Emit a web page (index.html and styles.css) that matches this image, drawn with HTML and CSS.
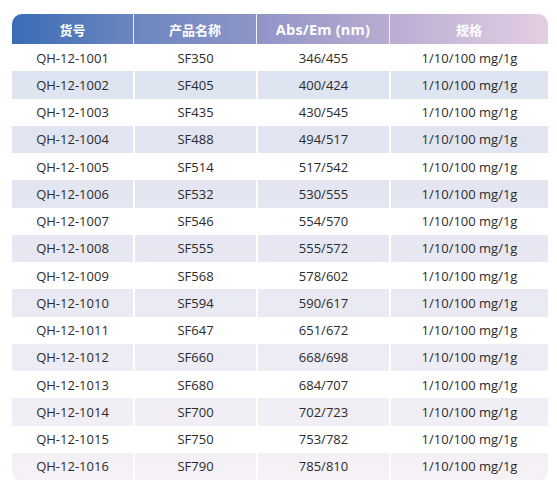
FILE: index.html
```html
<!DOCTYPE html>
<html lang="zh">
<head>
<meta charset="utf-8">
<link rel="stylesheet" href="styles.css">
</head>
<body>
<div class="table">
  <div class="row head">
    <div class="cell">货号</div>
    <div class="cell">产品名称</div>
    <div class="cell latin">Abs/Em (nm)</div>
    <div class="cell">规格</div>
  </div>
  <div class="body">
    <div class="row"><div class="cell">QH-12-1001</div><div class="cell">SF350</div><div class="cell">346/455</div><div class="cell">1/10/100 mg/1g</div></div>
    <div class="row"><div class="cell">QH-12-1002</div><div class="cell">SF405</div><div class="cell">400/424</div><div class="cell">1/10/100 mg/1g</div></div>
    <div class="row"><div class="cell">QH-12-1003</div><div class="cell">SF435</div><div class="cell">430/545</div><div class="cell">1/10/100 mg/1g</div></div>
    <div class="row"><div class="cell">QH-12-1004</div><div class="cell">SF488</div><div class="cell">494/517</div><div class="cell">1/10/100 mg/1g</div></div>
    <div class="row"><div class="cell">QH-12-1005</div><div class="cell">SF514</div><div class="cell">517/542</div><div class="cell">1/10/100 mg/1g</div></div>
    <div class="row"><div class="cell">QH-12-1006</div><div class="cell">SF532</div><div class="cell">530/555</div><div class="cell">1/10/100 mg/1g</div></div>
    <div class="row"><div class="cell">QH-12-1007</div><div class="cell">SF546</div><div class="cell">554/570</div><div class="cell">1/10/100 mg/1g</div></div>
    <div class="row"><div class="cell">QH-12-1008</div><div class="cell">SF555</div><div class="cell">555/572</div><div class="cell">1/10/100 mg/1g</div></div>
    <div class="row"><div class="cell">QH-12-1009</div><div class="cell">SF568</div><div class="cell">578/602</div><div class="cell">1/10/100 mg/1g</div></div>
    <div class="row"><div class="cell">QH-12-1010</div><div class="cell">SF594</div><div class="cell">590/617</div><div class="cell">1/10/100 mg/1g</div></div>
    <div class="row"><div class="cell">QH-12-1011</div><div class="cell">SF647</div><div class="cell">651/672</div><div class="cell">1/10/100 mg/1g</div></div>
    <div class="row"><div class="cell">QH-12-1012</div><div class="cell">SF660</div><div class="cell">668/698</div><div class="cell">1/10/100 mg/1g</div></div>
    <div class="row"><div class="cell">QH-12-1013</div><div class="cell">SF680</div><div class="cell">684/707</div><div class="cell">1/10/100 mg/1g</div></div>
    <div class="row"><div class="cell">QH-12-1014</div><div class="cell">SF700</div><div class="cell">702/723</div><div class="cell">1/10/100 mg/1g</div></div>
    <div class="row"><div class="cell">QH-12-1015</div><div class="cell">SF750</div><div class="cell">753/782</div><div class="cell">1/10/100 mg/1g</div></div>
    <div class="row"><div class="cell">QH-12-1016</div><div class="cell">SF790</div><div class="cell">785/810</div><div class="cell">1/10/100 mg/1g</div></div>
  </div>
</div>
</body>
</html>
```
FILE: styles.css
```css
html, body {
  margin: 0;
  padding: 0;
  background: #ffffff;
}
body {
  font-family: "Open Sans", "Noto Sans CJK SC", sans-serif;
  font-size: 13px;
  color: #2b2b2b;
}
.table {
  margin: 14px 0 0 12px;
  width: 536px;
}
.row {
  display: grid;
  grid-template-columns: 121px 123px 133px 159px;
  height: 27.25px;
}
.cell {
  display: flex;
  align-items: center;
  justify-content: center;
  white-space: nowrap;
}
.cell + .cell {
  border-left: 2px solid #ffffff;
}
.head {
  height: 30px;
  border-radius: 10px 10px 0 0;
  background: linear-gradient(90deg, #3a6cb4 0%, #6a86c0 22%, #8e94c6 45%, #b9acd2 70%, #e4cfe3 100%);
  color: #ffffff;
  font-weight: 700;
}
.head .latin {
  font-size: 14.5px;
  letter-spacing: 0.2px;
}
.head .cell + .cell {
  border-left: 1.5px solid rgba(255, 255, 255, 0.85);
}
.body {
  background: linear-gradient(180deg, #dce3f0 0%, #e6e7f2 45%, #f5f1f6 100%);
  border-radius: 0 0 8px 8px;
  overflow: hidden;
}
.body .row:nth-child(odd) {
  background: #ffffff;
}
```
